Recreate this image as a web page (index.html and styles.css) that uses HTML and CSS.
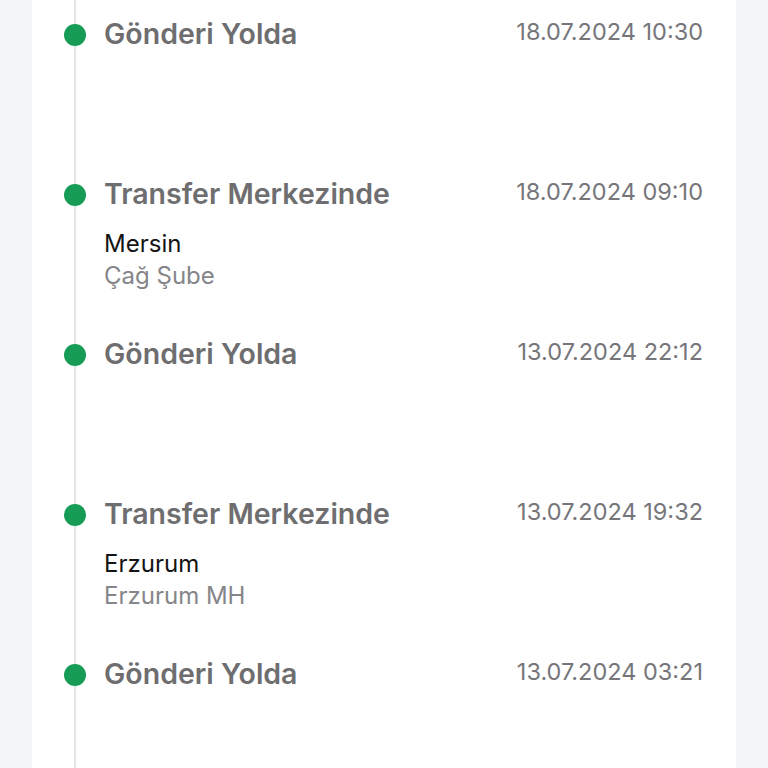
FILE: index.html
```html
<!DOCTYPE html>
<html lang="tr">
<head>
    <meta charset="UTF-8">
    <meta name="viewport" content="width=device-width, initial-scale=1.0">
    <title>Gönderi Hareketleri</title>
    <link rel="stylesheet" href="styles.css">
</head>
<body>
    <div class="card">
        <ul class="timeline">
            <li class="step">
                <div class="rail"><span class="dot"></span></div>
                <div class="info">
                    <div class="head">
                        <h3 class="status">Gönderi Yolda</h3>
                        <span class="date">18.07.2024 10:30</span>
                    </div>
                </div>
            </li>
            <li class="step">
                <div class="rail"><span class="dot"></span></div>
                <div class="info">
                    <div class="head">
                        <h3 class="status">Transfer Merkezinde</h3>
                        <span class="date">18.07.2024 09:10</span>
                    </div>
                    <div class="place">Mersin</div>
                    <div class="branch">Çağ Şube</div>
                </div>
            </li>
            <li class="step">
                <div class="rail"><span class="dot"></span></div>
                <div class="info">
                    <div class="head">
                        <h3 class="status">Gönderi Yolda</h3>
                        <span class="date">13.07.2024 22:12</span>
                    </div>
                </div>
            </li>
            <li class="step">
                <div class="rail"><span class="dot"></span></div>
                <div class="info">
                    <div class="head">
                        <h3 class="status">Transfer Merkezinde</h3>
                        <span class="date">13.07.2024 19:32</span>
                    </div>
                    <div class="place">Erzurum</div>
                    <div class="branch">Erzurum MH</div>
                </div>
            </li>
            <li class="step">
                <div class="rail"><span class="dot"></span></div>
                <div class="info">
                    <div class="head">
                        <h3 class="status">Gönderi Yolda</h3>
                        <span class="date">13.07.2024 03:21</span>
                    </div>
                </div>
            </li>
        </ul>
    </div>
</body>
</html>
```

FILE: styles.css
```css
body {
    margin: 0;
    padding: 0;
    background-color: #f4f5f8;
    font-family: 'Inter', 'Noto Sans', sans-serif;
    height: 768px;
    overflow: hidden;
}

.card {
    margin: 0 32px;
    background: #ffffff;
    padding: 0 33px 0 32px;
    min-height: 768px;
}

.timeline {
    list-style: none;
    margin: 0;
    padding: 0;
}

.step {
    display: grid;
    grid-template-columns: 22px 1fr;
    column-gap: 18px;
    height: 160px;
}

.rail {
    background: linear-gradient(#e4e4e6, #e4e4e6) no-repeat center / 2px 100%;
}

.dot {
    display: block;
    width: 22px;
    height: 22px;
    margin-top: 24px;
    border-radius: 50%;
    background-color: #179c55;
}

.info {
    padding-top: 18px;
}

.head {
    display: flex;
    justify-content: space-between;
    align-items: flex-start;
}

.status {
    margin: 0;
    font-size: 28.5px;
    line-height: 32px;
    font-weight: 600;
    color: #6e6e70;
}

.date {
    font-size: 23.5px;
    line-height: 28px;
    color: #76767a;
}

.place {
    margin-top: 18px;
    font-size: 24px;
    line-height: 32px;
    color: #141414;
}

.branch {
    font-size: 24px;
    line-height: 32px;
    color: #85858a;
}
```
